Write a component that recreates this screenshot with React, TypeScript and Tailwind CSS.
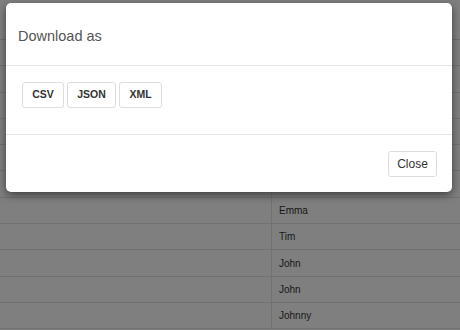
import React from "react";

const rows = ["", "", "", "", "", "", "Emma", "Tim", "John", "John", "Johnny"];

export default function App() {
  return (
    <div className="relative w-[460px] h-[330px] overflow-hidden bg-white" style={{ fontFamily: '"Liberation Sans", Arial, sans-serif' }}>
      {/* background table */}
      <div className="flex flex-col">
        <div className="h-[40px] border-b border-[#ddd]" />
        {rows.map((r, i) => (
          <div key={i} className="h-[26.3px] flex border-b border-[#e2e2e2]">
            <div className="w-[272px] border-r border-[#e2e2e2]" />
            <div className="flex-1 flex items-center pl-[7px] text-[10px] text-[#333]">{r}</div>
          </div>
        ))}
      </div>
      {/* overlay */}
      <div className="absolute inset-0 bg-black/50" />
      {/* modal */}
      <div className="absolute left-[6px] top-[3px] w-[446px] h-[189px] bg-white rounded-[5px] shadow-[0_3px_9px_rgba(0,0,0,0.5)] flex flex-col">
        <div className="h-[63px] border-b border-[#e5e5e5] flex items-center pl-[12px] pt-[6px]">
          <span className="text-[14.5px] text-[#555]">Download as</span>
        </div>
        <div className="h-[69px] border-b border-[#e5e5e5] pl-[16px] pt-[16px] flex items-start gap-[3px]">
          <button className="h-[26px] w-[42px] border border-[#ddd] rounded-[3px] bg-white text-[10.5px] font-bold text-[#333]">CSV</button>
          <button className="h-[26px] w-[49px] border border-[#ddd] rounded-[3px] bg-white text-[10.5px] font-bold text-[#333]">JSON</button>
          <button className="h-[26px] w-[43px] border border-[#ddd] rounded-[3px] bg-white text-[10.5px] font-bold text-[#333]">XML</button>
        </div>
        <div className="flex-1 flex justify-end items-start pt-[16px] pr-[15px]">
          <button className="h-[26px] w-[49px] border border-[#ddd] rounded-[3px] bg-white text-[12px] font-normal text-[#333]">Close</button>
        </div>
      </div>
    </div>
  );
}
